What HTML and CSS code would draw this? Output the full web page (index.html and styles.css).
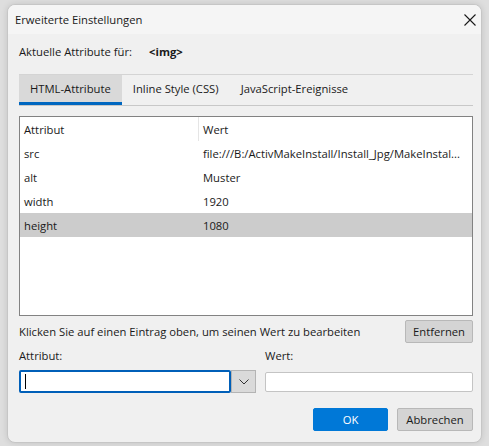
FILE: index.html
```html
<!DOCTYPE html>
<html lang="de">
<head>
  <meta charset="UTF-8">
  <title>Erweiterte Einstellungen</title>
  <link rel="stylesheet" href="styles.css">
</head>
<body>
  <div class="dialog">
    <!-- Title bar -->
    <div class="titlebar">
      <span class="title">Erweiterte Einstellungen</span>
      <svg class="close" width="12" height="12" viewBox="0 0 12 12">
        <path d="M0.5 0.5L11.5 11.5M11.5 0.5L0.5 11.5" stroke="#1a1a1a" stroke-width="1.1" fill="none"/>
      </svg>
    </div>

    <div class="content">
      <div class="target-row">
        <span>Aktuelle Attribute für:</span>
        <span class="target-tag">&lt;img&gt;</span>
      </div>

      <!-- Tabs -->
      <div class="tabs">
        <div class="tab active">HTML-Attribute</div>
        <div class="tab">Inline Style (CSS)</div>
        <div class="tab">JavaScript-Ereignisse</div>
      </div>

      <!-- Attribute list -->
      <div class="attr-table">
        <div class="attr-row header">
          <div class="cell name">Attribut</div>
          <div class="cell value">Wert</div>
        </div>
        <div class="attr-row">
          <div class="cell name">src</div>
          <div class="cell value">file:///B:/ActivMakeInstall/Install_Jpg/MakeInstal...</div>
        </div>
        <div class="attr-row">
          <div class="cell name">alt</div>
          <div class="cell value">Muster</div>
        </div>
        <div class="attr-row">
          <div class="cell name">width</div>
          <div class="cell value">1920</div>
        </div>
        <div class="attr-row selected">
          <div class="cell name">height</div>
          <div class="cell value">1080</div>
        </div>
      </div>

      <div class="hint-row">
        <span>Klicken Sie auf einen Eintrag oben, um seinen Wert zu bearbeiten</span>
        <button class="btn">Entfernen</button>
      </div>

      <!-- Edit fields -->
      <div class="edit-grid">
        <div class="field-label">Attribut:</div>
        <div class="field-label">Wert:</div>
        <div class="combo">
          <div class="combo-input"><span class="caret"></span></div>
          <div class="combo-button">
            <svg width="10" height="6" viewBox="0 0 10 6">
              <path d="M0.5 0.5L5 5L9.5 0.5" stroke="#333" stroke-width="1" fill="none"/>
            </svg>
          </div>
        </div>
        <div class="value-input"></div>
      </div>

      <div class="footer">
        <button class="btn primary">OK</button>
        <button class="btn cancel">Abbrechen</button>
      </div>
    </div>
  </div>
</body>
</html>
```

FILE: styles.css
```css
* {
  margin: 0;
  padding: 0;
  box-sizing: border-box;
}

body {
  font-family: 'Segoe UI', 'Open Sans', sans-serif;
  font-size: 11.25px;
  color: #1a1a1a;
  background-color: #dedede;
  padding: 4px 7px 0 7px;
  height: 446px;
  overflow: hidden;
}

/* Dialog frame */
.dialog {
  height: 439px;
  background-color: #f0f0f0;
  border: 1px solid #c6c6c6;
  border-radius: 8px;
  box-shadow: 0 0 6px rgba(0, 0, 0, 0.12);
  overflow: hidden;
}

.titlebar {
  height: 29px;
  display: flex;
  align-items: center;
  justify-content: space-between;
  padding: 0 5px 0 7px;
  background-color: #f5f5f5;
}

.content {
  padding: 0 8px 0 11px;
}

.target-row {
  margin-top: 7px;
  height: 20px;
  display: flex;
  align-items: center;
}

.target-tag {
  font-weight: bold;
  margin-left: 17px;
}

/* Tabs */
.tabs {
  margin-top: 13px;
  display: flex;
  border-top: 1px solid #d4d4d4;
  border-bottom: 1px solid #c8c8c8;
  height: 32px;
}

.tab {
  padding: 0 11px;
  height: 30px;
  display: flex;
  align-items: center;
  border-bottom: 3px solid transparent;
}

.tab.active {
  background-color: #d9d9d9;
  border-bottom-color: #0067c0;
}

/* Attribute list */
.attr-table {
  margin-top: 10px;
  height: 200px;
  background-color: white;
  border: 1px solid #828282;
}

.attr-row {
  display: flex;
  height: 24px;
  align-items: center;
}

.attr-row.selected {
  background-color: #cccccc;
}

.cell {
  padding-left: 4px;
  height: 100%;
  display: flex;
  align-items: center;
  white-space: nowrap;
}

.cell.name {
  width: 179px;
}

.header .cell.name {
  border-right: 1px solid #e5e5e5;
}

.cell.value {
  flex: 1;
  padding-left: 4px;
}

.hint-row {
  margin-top: 4px;
  display: flex;
  justify-content: space-between;
  align-items: center;
}

/* Buttons */
.btn {
  font-family: inherit;
  font-size: 11.25px;
  color: #1a1a1a;
  height: 23px;
  padding: 0 7px;
  background-color: #d4d4d4;
  border: 1px solid #b8b8b8;
  border-radius: 2px;
}

.btn.primary {
  background-color: #0078d7;
  border-color: #0078d7;
  color: white;
  width: 75px;
}

.btn.cancel {
  width: 76px;
  padding: 0;
}

/* Edit fields */
.edit-grid {
  margin-top: 4px;
  display: grid;
  grid-template-columns: 237px 1fr;
  column-gap: 9px;
  row-gap: 6px;
  align-items: center;
}

.field-label {
  height: 17px;
  display: flex;
  align-items: center;
}

.combo {
  display: flex;
  height: 23px;
}

.combo-input {
  flex: 1;
  background-color: white;
  border: 2px solid #005fb8;
  border-radius: 2px;
  padding: 2px 4px;
}

.caret {
  display: block;
  width: 1px;
  height: 15px;
  background-color: #000;
}

.combo-button {
  width: 25px;
  background-color: #dadada;
  border: 1px solid #b4b4b4;
  display: flex;
  align-items: center;
  justify-content: center;
}

.value-input {
  height: 20px;
  background-color: white;
  border: 1px solid #c4c4c4;
  border-radius: 2px;
}

.footer {
  margin-top: 15px;
  display: flex;
  justify-content: flex-end;
  gap: 9px;
}
```
